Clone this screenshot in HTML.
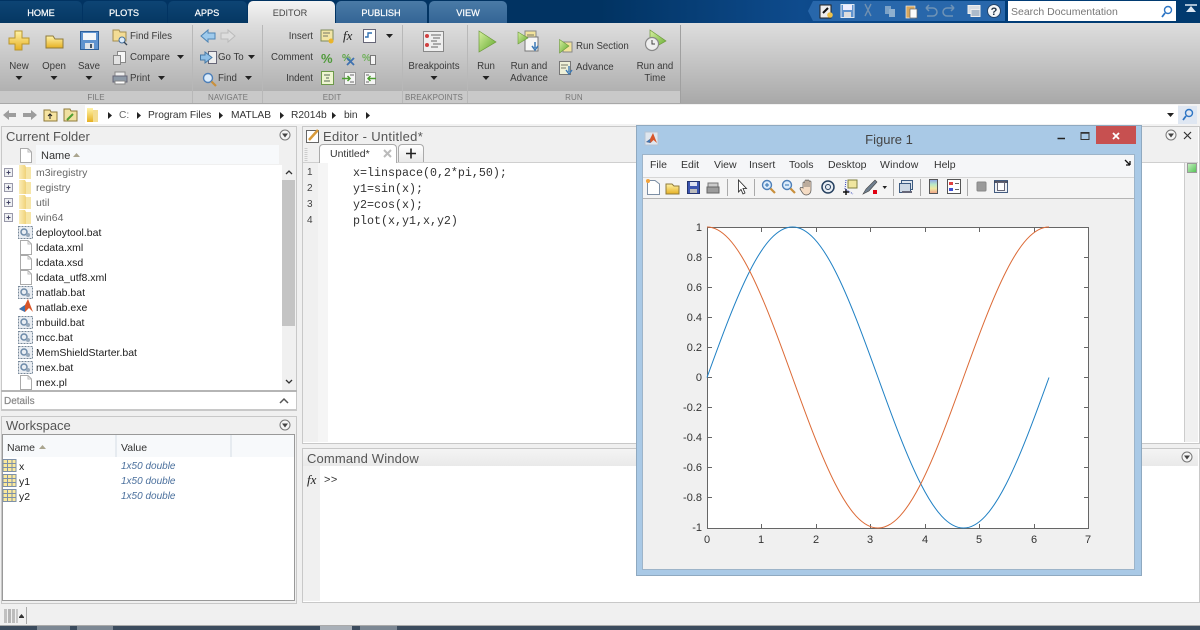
<!DOCTYPE html>
<html><head><meta charset="utf-8"><title>MATLAB R2014b</title>
<style>
html,body{margin:0;padding:0;background:#f0f0f0}
body{width:1200px;height:630px;overflow:hidden;position:relative;background:#f0f0f0;font-family:"Liberation Sans",sans-serif;font-size:10.5px;color:#333;filter:blur(.3px)}
div,span.t{position:absolute}
.t{position:absolute;white-space:nowrap;line-height:14px;height:14px;margin-top:1px}
.c{transform:translateX(-50%)}
.r{transform:translateX(-100%)}
.tab{top:1px;height:22px;background:linear-gradient(#0d4474,#053762);border-radius:5px 5px 0 0}
.tt{color:#fff;font-size:9.2px;top:5px;-webkit-text-stroke:.2px #fff}
.sec{top:91px;height:12px;background:#c9c9c9}
.sl{color:#777;font-size:8px;letter-spacing:.1px;top:90px}
.rb{font-size:9.7px;color:#3a3a3a}
.tree{color:#666}
.ttl{font-size:13px;color:#555}
.mono{font-family:"Liberation Mono",monospace;font-size:11.67px;color:#333}
.ln{font-size:10px;color:#444}
.m{color:#1c1c1c}
.p{font-size:10.2px;top:108px}
.yl{font-size:11px;color:#333}
svg{position:absolute;left:0;top:0}
</style></head><body>

<!-- top bar -->
<div style="left:0;top:0;width:1200px;height:23px;background:linear-gradient(90deg,#013362 0,#013362 600px,#0e4b8d 800px,#013d78 1000px,#013a6e 1200px)"></div>
<div class="tab" style="left:0;width:82px;border-top-left-radius:0"></div>
<div class="tab" style="left:83px;width:84px"></div>
<div class="tab" style="left:168px;width:79px"></div>
<div class="tab" style="left:248px;width:87px;top:1px;background:linear-gradient(#f4f4f4,#dedede)"></div>
<div class="tab" style="left:336px;width:91px;background:linear-gradient(#4a7aa6,#336495)"></div>
<div class="tab" style="left:429px;width:78px;background:linear-gradient(#4a7aa6,#336495)"></div>
<span class="t tt c" style="left:41px">HOME</span>
<span class="t tt c" style="left:124px">PLOTS</span>
<span class="t tt c" style="left:207px">APPS</span>
<span class="t tt c" style="left:290px;color:#444;-webkit-text-stroke:0">EDITOR</span>
<span class="t tt c" style="left:381px">PUBLISH</span>
<span class="t tt c" style="left:468px">VIEW</span>
<div style="left:813px;top:1px;width:192px;height:20px;background:#2867ab"></div>
<div style="left:1008px;top:1px;width:168px;height:20px;background:#fff"></div>
<span class="t" style="left:1011px;top:4px;color:#777;font-size:10.5px">Search Documentation</span>

<!-- ribbon -->
<div style="left:0;top:23px;width:1200px;height:81px;background:linear-gradient(#dedede,#a8a8a8)"></div>
<div class="sec" style="left:0;width:192px"></div>
<div class="sec" style="left:193px;width:69px"></div>
<div class="sec" style="left:263px;width:139px"></div>
<div class="sec" style="left:403px;width:64px"></div>
<div class="sec" style="left:468px;width:212px"></div>
<div style="left:192px;top:25px;width:1px;height:78px;background:#b8b8b8"></div>
<div style="left:262px;top:25px;width:1px;height:78px;background:#b8b8b8"></div>
<div style="left:402px;top:25px;width:1px;height:78px;background:#b8b8b8"></div>
<div style="left:467px;top:25px;width:1px;height:78px;background:#b8b8b8"></div>
<div style="left:680px;top:25px;width:1px;height:78px;background:#a0a0a0"></div>
<span class="t sl c" style="left:96px">FILE</span>
<span class="t sl c" style="left:228px">NAVIGATE</span>
<span class="t sl c" style="left:332px">EDIT</span>
<span class="t sl c" style="left:434px">BREAKPOINTS</span>
<span class="t sl c" style="left:574px">RUN</span>

<span class="t rb c" style="left:19px;top:59px">New</span>
<span class="t rb c" style="left:54px;top:59px">Open</span>
<span class="t rb c" style="left:89px;top:59px">Save</span>
<span class="t rb" style="left:130px;top:29px">Find Files</span>
<span class="t rb" style="left:130px;top:50px">Compare</span>
<span class="t rb" style="left:130px;top:71px">Print</span>
<span class="t rb" style="left:218px;top:50px">Go To</span>
<span class="t rb" style="left:218px;top:71px">Find</span>
<span class="t rb r" style="left:313px;top:29px">Insert</span>
<span class="t rb r" style="left:313px;top:50px">Comment</span>
<span class="t rb r" style="left:313px;top:71px">Indent</span>
<span class="t rb c" style="left:434px;top:59px">Breakpoints</span>
<span class="t rb c" style="left:486px;top:59px">Run</span>
<span class="t rb c" style="left:529px;top:59px">Run and</span>
<span class="t rb c" style="left:529px;top:71px">Advance</span>
<span class="t rb" style="left:576px;top:39px">Run Section</span>
<span class="t rb" style="left:576px;top:60px">Advance</span>
<span class="t rb c" style="left:655px;top:59px">Run and</span>
<span class="t rb c" style="left:655px;top:71px">Time</span>

<!-- path bar -->
<div style="left:0;top:104px;width:1200px;height:22px;background:#f2f2f2"></div>
<div style="left:85px;top:105px;width:1093px;height:19px;background:#fff"></div>
<div style="left:1178px;top:106px;width:19px;height:18px;background:#dfe7f2"></div>
<span class="t p" style="left:119px;color:#666">C:</span>
<span class="t p" style="left:148px">Program Files</span>
<span class="t p" style="left:231px">MATLAB</span>
<span class="t p" style="left:291px">R2014b</span>
<span class="t p" style="left:344px">bin</span>

<!-- current folder -->
<div style="left:1px;top:126px;width:294px;height:282px;border:1px solid #c8c8c8;background:#fff"></div>
<div style="left:2px;top:127px;width:294px;height:18px;background:#f0f0f0"></div>
<div style="left:2px;top:145px;width:294px;height:20px;background:#f0f0f0"></div>
<div style="left:36px;top:145px;width:243px;height:19px;background:#f7f9fb"></div>
<div style="left:282px;top:165px;width:14px;height:225px;background:#f0f0f0"></div>
<div style="left:282px;top:180px;width:13px;height:146px;background:#c4c4c4"></div>
<div style="left:1px;top:390px;width:296px;height:2px;background:#b5b5b5"></div>
<span class="t" style="left:4px;top:394px;font-size:10px;color:#888;-webkit-text-stroke:.2px #888">Details</span>
<div style="left:1px;top:409px;width:296px;height:2px;background:#c8c8c8"></div>
<span class="t ttl" style="left:6px;top:129px">Current Folder</span>
<span class="t" style="left:41px;top:148px;font-size:11px">Name</span>
<span class="t tree" style="left:36px;top:165px">m3iregistry</span>
<span class="t tree" style="left:36px;top:180px">registry</span>
<span class="t tree" style="left:36px;top:195px">util</span>
<span class="t tree" style="left:36px;top:210px">win64</span>
<span class="t m" style="left:36px;top:225px">deploytool.bat</span>
<span class="t m" style="left:36px;top:240px">lcdata.xml</span>
<span class="t m" style="left:36px;top:255px">lcdata.xsd</span>
<span class="t m" style="left:36px;top:270px">lcdata_utf8.xml</span>
<span class="t m" style="left:36px;top:285px">matlab.bat</span>
<span class="t m" style="left:36px;top:300px">matlab.exe</span>
<span class="t m" style="left:36px;top:315px">mbuild.bat</span>
<span class="t m" style="left:36px;top:330px">mcc.bat</span>
<span class="t m" style="left:36px;top:345px">MemShieldStarter.bat</span>
<span class="t m" style="left:36px;top:360px">mex.bat</span>
<span class="t m" style="left:36px;top:375px">mex.pl</span>

<!-- workspace -->
<div style="left:1px;top:416px;width:294px;height:186px;border:1px solid #c8c8c8;background:#f0f0f0"></div>
<div style="left:2px;top:434px;width:293px;height:167px;background:#fff;border:1px solid #999;box-sizing:border-box"></div>
<div style="left:3px;top:435px;width:291px;height:22px;background:#f7f9fb"></div>
<div style="left:115px;top:435px;width:2px;height:22px;background:#e6ebf0"></div>
<div style="left:230px;top:435px;width:2px;height:22px;background:#e6ebf0"></div>
<span class="t ttl" style="left:6px;top:418px">Workspace</span>
<span class="t" style="left:7px;top:440px">Name</span>
<span class="t" style="left:121px;top:440px">Value</span>
<span class="t m" style="left:19px;top:459px">x</span>
<span class="t m" style="left:19px;top:474px">y1</span>
<span class="t m" style="left:19px;top:489px">y2</span>
<span class="t" style="left:121px;top:459px;font-style:italic;color:#4a6f9c;font-size:10px">1x50 double</span>
<span class="t" style="left:121px;top:474px;font-style:italic;color:#4a6f9c;font-size:10px">1x50 double</span>
<span class="t" style="left:121px;top:489px;font-style:italic;color:#4a6f9c;font-size:10px">1x50 double</span>

<!-- editor -->
<div style="left:302px;top:126px;width:896px;height:316px;border:1px solid #c8c8c8;background:#fff"></div>
<div style="left:303px;top:127px;width:895px;height:36px;background:#f0f0f0"></div>
<div style="left:303px;top:163px;width:15px;height:279px;background:#f0f0f0"></div>
<div style="left:318px;top:163px;width:10px;height:279px;background:#f5f5f5"></div>
<div style="left:1184px;top:163px;width:14px;height:279px;background:#f0f0f0;border-left:1px solid #ccc;box-sizing:border-box"></div>
<div style="left:1187px;top:163px;width:10px;height:10px;background:linear-gradient(135deg,#c4eec0,#57c457);border:1px solid #9a9a9a;box-sizing:border-box"></div>
<div style="left:303px;top:162px;width:895px;height:1px;background:#cfcfcf"></div>
<div style="left:319px;top:144px;width:78px;height:19px;background:#fff;border:1px solid #aaa;border-bottom:0;box-sizing:border-box;border-radius:4px 4px 0 0"></div>
<div style="left:398px;top:144px;width:26px;height:18px;background:linear-gradient(#fff,#e8e8e8);border:1px solid #aaa;border-bottom:0;box-sizing:border-box;border-radius:4px 4px 0 0"></div>
<span class="t ttl" style="left:323px;top:129px;letter-spacing:.3px">Editor - Untitled*</span>
<span class="t" style="left:330px;top:146px;font-size:10.5px">Untitled*</span>
<span class="t ln" style="left:307px;top:165px">1</span>
<span class="t ln" style="left:307px;top:181px">2</span>
<span class="t ln" style="left:307px;top:197px">3</span>
<span class="t ln" style="left:307px;top:213px">4</span>
<span class="t mono" style="left:353px;top:165px">x=linspace(0,2*pi,50);</span>
<span class="t mono" style="left:353px;top:181px">y1=sin(x);</span>
<span class="t mono" style="left:353px;top:197px">y2=cos(x);</span>
<span class="t mono" style="left:353px;top:213px">plot(x,y1,x,y2)</span>

<!-- command window -->
<div style="left:302px;top:448px;width:896px;height:153px;border:1px solid #c8c8c8;background:#fff"></div>
<div style="left:303px;top:449px;width:895px;height:17px;background:linear-gradient(#f4f4f4,#e9e9e9)"></div>
<div style="left:303px;top:466px;width:17px;height:135px;background:#f0f0f0"></div>
<span class="t ttl" style="left:307px;top:451px;letter-spacing:.15px">Command Window</span>
<span class="t" style="left:307px;top:472px;font-family:'Liberation Serif',serif;font-style:italic;font-size:13px;color:#222">fx</span>
<span class="t" style="left:324px;top:472px;font-size:11px;color:#333;letter-spacing:.5px">&gt;&gt;</span>

<!-- status -->
<div style="left:0;top:625px;width:1200px;height:1px;background:#aaa"></div>
<div style="left:0;top:626px;width:1200px;height:4px;background:#3c4c5e"></div>
<div style="left:37px;top:626px;width:33px;height:4px;background:#7d8894"></div>
<div style="left:77px;top:626px;width:36px;height:4px;background:#7d8894"></div>
<div style="left:320px;top:626px;width:32px;height:4px;background:#a9b0b8"></div>
<div style="left:360px;top:626px;width:37px;height:4px;background:#7d8894"></div>
<div style="left:26px;top:607px;width:1px;height:17px;background:#aaa"></div>

<!-- figure -->
<div style="left:636px;top:125px;width:506px;height:451px;background:#a9c9e6;border:1px solid #8fa9c0;box-sizing:border-box"></div>
<div style="left:642px;top:154px;width:493px;height:416px;background:#f0f0f0;border:1px solid #9db4c9;box-sizing:border-box"></div>
<div style="left:643px;top:155px;width:491px;height:22px;background:#f5f6f8"></div>
<div style="left:643px;top:177px;width:491px;height:22px;background:#f4f4f4;border-top:1px solid #d6d6d6;border-bottom:1px solid #b4b4b4;box-sizing:border-box"></div>
<div style="left:1096px;top:126px;width:40px;height:18px;background:#c75050"></div>
<span class="t c" style="left:889px;top:132px;font-size:13px;color:#444">Figure 1</span>
<span class="t" style="left:650px;top:157px">File</span>
<span class="t" style="left:681px;top:157px">Edit</span>
<span class="t" style="left:714px;top:157px">View</span>
<span class="t" style="left:749px;top:157px">Insert</span>
<span class="t" style="left:789px;top:157px">Tools</span>
<span class="t" style="left:828px;top:157px">Desktop</span>
<span class="t" style="left:880px;top:157px;letter-spacing:.2px">Window</span>
<span class="t" style="left:934px;top:157px">Help</span>
<div style="left:707px;top:227px;width:381px;height:301px;background:#fff"></div>

<span class="t yl r" style="left:702px;top:220px">1</span>
<span class="t yl r" style="left:702px;top:250px">0.8</span>
<span class="t yl r" style="left:702px;top:280px">0.6</span>
<span class="t yl r" style="left:702px;top:310px">0.4</span>
<span class="t yl r" style="left:702px;top:340px">0.2</span>
<span class="t yl r" style="left:702px;top:370px">0</span>
<span class="t yl r" style="left:702px;top:400px">-0.2</span>
<span class="t yl r" style="left:702px;top:430px">-0.4</span>
<span class="t yl r" style="left:702px;top:460px">-0.6</span>
<span class="t yl r" style="left:702px;top:490px">-0.8</span>
<span class="t yl r" style="left:702px;top:520px">-1</span>
<span class="t yl c" style="left:707px;top:532px">0</span>
<span class="t yl c" style="left:761px;top:532px">1</span>
<span class="t yl c" style="left:816px;top:532px">2</span>
<span class="t yl c" style="left:870px;top:532px">3</span>
<span class="t yl c" style="left:925px;top:532px">4</span>
<span class="t yl c" style="left:979px;top:532px">5</span>
<span class="t yl c" style="left:1034px;top:532px">6</span>
<span class="t yl c" style="left:1088px;top:532px">7</span>

<svg width="1200" height="630" viewBox="0 0 1200 630" xmlns="http://www.w3.org/2000/svg">
<defs>
<linearGradient id="gy" x1="0" y1="0" x2="0" y2="1"><stop offset="0" stop-color="#fff3a8"/><stop offset="1" stop-color="#e6b022"/></linearGradient>
<linearGradient id="gf" x1="0" y1="0" x2="1" y2="0"><stop offset="0" stop-color="#fbedb8"/><stop offset="1" stop-color="#f0d27a"/></linearGradient>
<linearGradient id="gg" x1="0" y1="0" x2="1" y2="1"><stop offset="0" stop-color="#d8f0a0"/><stop offset="1" stop-color="#5fa82c"/></linearGradient>
<linearGradient id="rb" x1="0" y1="0" x2="0" y2="1"><stop offset="0" stop-color="#8ca0e8"/><stop offset=".35" stop-color="#b8e8c8"/><stop offset=".65" stop-color="#f0e8a0"/><stop offset="1" stop-color="#f0a088"/></linearGradient>
<g id="doc"><path d="M.5 .5H8L11.5 4V14.5H.5Z" fill="#fff" stroke="#aaa"/><path d="M8 .5V4H11.5" fill="none" stroke="#bbb"/></g>
<g id="fold"><path d="M0 0H6L7 2V14H0Z" fill="url(#gf)"/><path d="M7 2H12V14H7Z" fill="#f6e5a6"/></g>
<g id="plusb"><rect x=".5" y=".5" width="8" height="8" fill="#eef0f3" stroke="#99a"/><path d="M2.5 4.5H6.5M4.5 2.5V6.5" stroke="#446"/></g>
<g id="bat"><rect x=".5" y=".5" width="14" height="12" fill="#e9edf2" stroke="#789" stroke-dasharray="2 1"/><circle cx="6" cy="6" r="3" fill="none" stroke="#6d8aa8" stroke-width="1.5"/><circle cx="10" cy="9" r="2" fill="#9ab" /></g>
<g id="grid"><rect x=".5" y=".5" width="13" height="12" fill="#fbe99b" stroke="#7d90a8"/><path d="M.5 4.500H13.5M.5 8.500H13.5M5 .5V12.500M9.500 .5V12.500" stroke="#7d90a8"/></g>
<path id="car" d="M0 0H7L3.500 4Z" fill="#222"/>
<path id="arr" d="M0 0L4 3.500L0 7Z" fill="#222"/>
<g id="drop"><circle cx="0" cy="0" r="5" fill="#f6f6f6" stroke="#777"/><path d="M-3 -1.500H3L0 2.500Z" fill="#444"/></g>
<g id="play"><path d="M0 0L17 11L0 21Z" fill="url(#gg)" stroke="#6c9a3a" stroke-width=".7"/></g>
<g id="mag"><circle cx="6" cy="6" r="4.500" fill="#dcecfb" stroke="#4d7fb8" stroke-width="1.400"/><path d="M9.500 9.500L14 14" stroke="#c9903c" stroke-width="2.200"/></g>
</defs>

<!-- Plot -->
<g fill="none" stroke="#666" stroke-width="1" shape-rendering="crispEdges">
<rect x="707.5" y="227.5" width="381" height="301"/>
<path d="M761.5 528V524M816.5 528V524M870.5 528V524M925.5 528V524M979.5 528V524M1034.5 528V524M761.5 228V232M816.5 228V232M870.5 228V232M925.5 228V232M979.5 228V232M1034.5 228V232"/>
<path d="M708 257.5H712M708 287.5H712M708 317.5H712M708 347.5H712M708 377.5H712M708 407.5H712M708 437.5H712M708 467.5H712M708 497.5H712M1088 257.5H1084M1088 287.5H1084M1088 317.5H1084M1088 347.5H1084M1088 377.5H1084M1088 407.5H1084M1088 437.5H1084M1088 467.5H1084M1088 497.5H1084"/>
</g>
<path d="M707 377.5C737 294.4 762.5 227 792.5 227C822.5 227 848 294.4 878 377.5C908 460.6 933.5 528 963.5 528C993.5 528 1019 460.6 1049 377.5" fill="none" stroke="#1f80c4" stroke-width="1"/>
<path d="M707 227C737 227 762.5 294.4 792.5 377.5C822.5 460.6 848 528 878 528C908 528 933.5 460.6 963.5 377.5C993.5 294.4 1019 227 1049 227" fill="none" stroke="#dc6a36" stroke-width="1"/>

<!-- ribbon large icons -->
<path d="M15 31H22V38H29V44H22V50H15V44H9V38H15Z" fill="url(#gy)" stroke="#b8952e"/>
<path d="M46 36H53L55 39H63V48H46Z" fill="url(#gy)" stroke="#8f7a3a"/>
<rect x="80.5" y="31.5" width="18" height="18" fill="#5f93cf" stroke="#2d5f99"/>
<rect x="83" y="33" width="13" height="7" fill="#f4f6f8"/><rect x="85" y="43" width="9" height="6" fill="#dfe3e8"/><rect x="90" y="44" width="2" height="4" fill="#456"/>
<use href="#car" x="15.5" y="76"/><use href="#car" x="50.5" y="76"/><use href="#car" x="85.5" y="76"/>
<use href="#car" x="177" y="55"/><use href="#car" x="158" y="76"/><use href="#car" x="248" y="55"/><use href="#car" x="245" y="76"/><use href="#car" x="386" y="34"/><use href="#car" x="430.5" y="76"/><use href="#car" x="482.5" y="76"/>

<!-- small ribbon icons -->
<path d="M113 30H119L120 32H126V41H113Z" fill="#f3dc95" stroke="#a38d4f"/><circle cx="122" cy="40" r="3" fill="#dcecfb" stroke="#47719e"/><path d="M124 42L127 45" stroke="#345" stroke-width="1.300"/>
<rect x="117.5" y="51.5" width="8" height="11" fill="#f6f6f6" stroke="#888"/><rect x="113.5" y="55.5" width="7" height="9" fill="#e2e2e2" stroke="#888"/>
<rect x="115" y="72" width="10" height="4" fill="#eee" stroke="#888"/><rect x="113" y="76" width="14" height="6" fill="#8d99a6" stroke="#667"/><rect x="115" y="81" width="10" height="3" fill="#fff" stroke="#888"/>
<path d="M201 36L208 30V33H215V39H208V42Z" fill="#9ecaec" stroke="#4d84b5"/>
<path d="M235 36L228 30V33H221V39H228V42Z" fill="#ddd" stroke="#bbb"/>
<rect x="208.500" y="51.500" width="8" height="12" fill="#eee" stroke="#667"/><path d="M212 57.500L205 52V55H200.500V60H205V63Z" fill="#8fbfe6" stroke="#4678a5"/>
<use href="#mag" x="202" y="72"/>
<rect x="321" y="30" width="12" height="11" fill="#f2e5a6" stroke="#7f8a5a"/><path d="M323 33H330M323 36H328" stroke="#776"/><circle cx="331" cy="41" r="2.500" fill="#eab52c"/>
<text x="343" y="40" font-family="Liberation Serif,serif" font-style="italic" font-size="13" fill="#222">fx</text>
<rect x="363.500" y="29.500" width="12" height="13" fill="#fff" stroke="#667"/><path d="M365 37H368V33H372" stroke="#2f6fb0" fill="none" stroke-width="1.400"/>
<text x="321" y="63" font-size="13" font-weight="bold" fill="#4f9a3a" font-family="Liberation Sans,sans-serif">%</text>
<text x="342" y="61" font-size="10" font-weight="bold" fill="#5fa54a" font-family="Liberation Sans,sans-serif">%</text><path d="M347 58L354 65M354 58L347 65" stroke="#3f72b0" stroke-width="1.800"/>
<text x="362" y="61" font-size="10" font-weight="bold" fill="#6fb05a" font-family="Liberation Sans,sans-serif">%</text><rect x="370.500" y="55.500" width="5" height="9" fill="#f4f4f4" stroke="#777"/>
<rect x="321.500" y="71.500" width="12" height="13" fill="#eef5d0" stroke="#6d9a4a"/><path d="M324 75H330M326 78H329M324 81H330" stroke="#565"/>
<rect x="344.500" y="72.500" width="11" height="12" fill="#f5f5f5" stroke="#999"/><path d="M350 75H354M350 82H354" stroke="#666"/><path d="M342 78.500H350M347.500 76L350 78.500L347.500 81" stroke="#4e9e32" stroke-width="1.500" fill="none"/>
<rect x="364.500" y="72.500" width="11" height="12" fill="#f5f5f5" stroke="#999"/><path d="M366 75H369M366 82H369" stroke="#666"/><path d="M376 78.500H368M370.500 76L368 78.500L370.500 81" stroke="#4e9e32" stroke-width="1.500" fill="none"/>

<!-- breakpoints & run -->
<rect x="423.500" y="31.500" width="20" height="20" fill="#eee" stroke="#888"/><circle cx="427" cy="36" r="2" fill="#d04040"/><circle cx="427" cy="45" r="2" fill="#d04040"/><path d="M431 35H441M433 38H440M431 41H437M433 44H441M431 47H438" stroke="#666"/>
<use href="#play" x="479" y="31"/>
<rect x="525" y="31" width="11" height="14" fill="#f2e39c" stroke="#888"/><path d="M527 35H534M527 38H533" stroke="#776"/>
<rect x="525" y="37" width="13" height="14" fill="#f6f6f6" stroke="#777"/><path d="M518 32L528 38L518 44Z" fill="url(#gg)" stroke="#6c9a3a" stroke-width=".6"/><path d="M535 42V48M532 46L535 50L538 46" stroke="#3a78b5" fill="none" stroke-width="1.500"/>
<rect x="563" y="42" width="9" height="10" fill="#f2e39c" stroke="#888"/><path d="M559.500 39.500L569 46L559.500 53Z" fill="url(#gg)" stroke="#6c9a3a" stroke-width=".6"/>
<rect x="559.500" y="61.500" width="11" height="13" fill="#eef0d8" stroke="#777"/><path d="M561 65H568M561 68H566" stroke="#776"/><path d="M569 66V72M566 70L569 74L572 70" stroke="#3a78b5" fill="none" stroke-width="1.400"/>
<path d="M650 30L666 41L650 50Z" fill="url(#gg)" stroke="#6c9a3a" stroke-width=".7"/><circle cx="652" cy="44" r="6.500" fill="#eee" stroke="#888" stroke-width="1.200"/><path d="M652 40V44H655" stroke="#444" fill="none"/>

<!-- quick access -->
<path d="M813 1L808 11L813 21Z" fill="#2867ab"/>
<rect x="820" y="5" width="11" height="13" fill="#eee" stroke="#222"/><path d="M823 13L828 8" stroke="#111" stroke-width="2"/><circle cx="830" cy="15" r="2.800" fill="#edc14a"/>
<rect x="841" y="4.500" width="13" height="13" fill="#5f93cf" stroke="#dfe9f3"/><rect x="843" y="5" width="9" height="5" fill="#eef"/><rect x="844" y="12" width="7" height="5" fill="#ddd"/>
<path d="M865 4L871 16M871 4L865 16" stroke="#6f8fb0" stroke-width="1.400"/>
<rect x="885" y="6" width="6" height="8" fill="#7da2c6"/><rect x="889" y="9" width="6" height="8" fill="#8fb0cf"/>
<rect x="906" y="6" width="9" height="12" fill="#d8a85e" stroke="#eee" stroke-width=".7"/><rect x="910" y="9" width="7" height="9" fill="#fafafa" stroke="#666" stroke-width=".7"/>
<path d="M926 8H933A4 4 0 0 1 933 16H927M926 8L929 5M926 8L929 11" fill="none" stroke="#6f93b6" stroke-width="1.500"/>
<path d="M954 8H947A4 4 0 0 0 947 16H953M954 8L951 5M954 8L951 11" fill="none" stroke="#6f93b6" stroke-width="1.500"/>
<rect x="968" y="5.500" width="12" height="8" fill="#d8dde3" stroke="#eee"/><rect x="971" y="9.500" width="9" height="7" fill="#aebccb" stroke="#eee"/>
<circle cx="994" cy="11" r="6.500" fill="#f4f6f8" stroke="#23456b"/><text x="994" y="15" text-anchor="middle" font-size="11" font-weight="bold" fill="#234" font-family="Liberation Sans,sans-serif">?</text>
<circle cx="1168" cy="10" r="3.500" fill="none" stroke="#2d75c4" stroke-width="1.400"/><path d="M1165 13L1162 17" stroke="#2d75c4" stroke-width="1.800"/>
<path d="M1185 5H1197" stroke="#dce7f2" stroke-width="1.500"/><path d="M1191 6L1186 12H1196Z" fill="#dce7f2"/>

<!-- path bar icons -->
<path d="M3 115L9 110V113H16V117H9V120Z" fill="#9d9d9d"/><path d="M37 115L31 110V113H23V117H31V120Z" fill="#9d9d9d"/>
<path d="M44 110H50L51 112H57V121H44Z" fill="#f6e3a0" stroke="#8f7a3a"/><path d="M50 119V114M48 116L50 114L52 116" stroke="#222" fill="none"/>
<path d="M64 109H70L71 111H77V121H64Z" fill="#efe0a0" stroke="#8f7a3a"/><path d="M67 120L73 114" stroke="#4e9e32" stroke-width="2"/>
<path d="M87 108H93V122H87Z" fill="url(#gy)"/><path d="M93 110H98V122H93Z" fill="#f4dd90"/>
<use href="#arr" x="108" y="112"/><use href="#arr" x="137" y="112"/><use href="#arr" x="219" y="112"/><use href="#arr" x="280" y="112"/><use href="#arr" x="332" y="112"/><use href="#arr" x="366" y="112"/>
<path d="M1167 113H1174L1170.500 117Z" fill="#222"/>
<circle cx="1189" cy="113" r="3.500" fill="none" stroke="#2d75c4" stroke-width="1.400"/><path d="M1186 116L1183 120" stroke="#2d75c4" stroke-width="1.800"/>

<!-- current folder icons -->
<use href="#drop" x="285" y="135"/>
<use href="#doc" x="20" y="148"/>
<path d="M73 157L76.500 153L80 157Z" fill="#aaa58f"/>
<use href="#plusb" x="4" y="168"/><use href="#plusb" x="4" y="183"/><use href="#plusb" x="4" y="198"/><use href="#plusb" x="4" y="213"/>
<use href="#fold" x="19" y="165"/><use href="#fold" x="19" y="180"/><use href="#fold" x="19" y="195"/><use href="#fold" x="19" y="210"/>
<use href="#bat" x="18" y="226"/>
<use href="#doc" x="20" y="240"/><use href="#doc" x="20" y="255"/><use href="#doc" x="20" y="270"/>
<use href="#bat" x="18" y="286"/>
<path d="M19 309L25 305L28 299L33 312L29 308L25 312Z" fill="#d8562a"/><path d="M19 309L25 305L25 312Z" fill="#3f74b0"/>
<use href="#bat" x="18" y="316"/><use href="#bat" x="18" y="331"/><use href="#bat" x="18" y="346"/><use href="#bat" x="18" y="361"/>
<use href="#doc" x="20" y="375"/>
<path d="M286 174L289 171L292 174" fill="none" stroke="#333" stroke-width="1.300"/>
<path d="M286 380L289 383L292 380" fill="none" stroke="#333" stroke-width="1.300"/>
<path d="M280 403L284 399L288 403" fill="none" stroke="#555" stroke-width="1.500"/>

<!-- workspace icons -->
<use href="#drop" x="285" y="425"/>
<path d="M39 449L42.500 445L46 449Z" fill="#aaa58f"/>
<use href="#grid" x="2.500" y="459"/><use href="#grid" x="2.500" y="474"/><use href="#grid" x="2.500" y="489"/>

<!-- editor icons -->
<rect x="306.500" y="130.500" width="12" height="12" fill="#fff" stroke="#666"/><path d="M309 140L318 130" stroke="#d89a3a" stroke-width="2.500"/>
<path d="M306 148V161" stroke="#ccc" stroke-width="3" stroke-dasharray="1 1"/>
<path d="M384 150L391 157M391 150L384 157" stroke="#bbb" stroke-width="2"/>
<path d="M406 153.500H416M411 148.500V158.500" stroke="#222" stroke-width="1.600"/>
<use href="#drop" x="1171" y="135"/><path d="M1184 132L1191 139M1191 132L1184 139" stroke="#333" stroke-width="1.200"/>
<use href="#drop" x="1187" y="457"/>

<!-- grip -->
<rect x="4" y="609" width="3" height="14" fill="#c0c0c0"/><rect x="8" y="609" width="3" height="14" fill="#b4b4b4"/><rect x="12" y="609" width="3" height="14" fill="#bcbcbc"/><rect x="16" y="609" width="2" height="14" fill="#c8c8c8"/>
<path d="M19 617L21.500 614L24 617Z" fill="#333"/><path d="M19 617.500H24" stroke="#333"/>

<!-- figure window chrome -->
<rect x="645" y="132" width="13" height="13" fill="#dfe6ee" stroke="#b5c4d4"/><path d="M646 142L650 139L653 133L657 143L653.500 140L650.500 143Z" fill="#d8562a"/><path d="M646 142L650 139L650.500 143Z" fill="#3f74b0"/>
<path d="M1057.500 138.500H1065" stroke="#222" stroke-width="1.500"/>
<rect x="1081" y="132.500" width="8" height="7" fill="none" stroke="#333"/><path d="M1081 133H1089" stroke="#333" stroke-width="1.500"/>
<path d="M1113 133L1119 139M1119 133L1113 139" stroke="#fff" stroke-width="1.800"/>
<path d="M1125 160L1130 165M1130 165H1126M1130 165V161" stroke="#111" stroke-width="1.300" fill="none"/>

<!-- figure toolbar -->
<path d="M647.500 180.500H655L659.500 184V194.500H647.500Z" fill="#fff" stroke="#7d8fa5"/><circle cx="648" cy="181" r="2" fill="#f3a33a"/>
<path d="M666 184H672L674 186H679V194H666Z" fill="url(#gy)" stroke="#8f7a3a"/>
<rect x="687.500" y="181.500" width="12" height="12" fill="#3c55b0" stroke="#24346e"/><rect x="690" y="182" width="7" height="4" fill="#dfe3f2"/><rect x="690" y="189" width="7" height="4" fill="#bbb"/>
<rect x="708" y="183" width="10" height="5" fill="#cbcbcb" stroke="#777"/><rect x="707" y="187" width="12" height="6" fill="#9b9b9b" stroke="#666"/>
<path d="M727.500 179V196M754.500 179V196M893.500 179V196M920.500 179V196M967.500 179V196" stroke="#aaa"/>
<path d="M738.500 180V192L741 189.500L743 194L745 193L743 188.500H746.500Z" fill="#fff" stroke="#222" stroke-width=".8"/>
<g transform="translate(761 179)"><use href="#mag"/><path d="M4 6H8M6 4V8" stroke="#2e6fb0"/></g>
<g transform="translate(781 179)"><use href="#mag"/><path d="M4 6H8" stroke="#2e6fb0"/></g>
<path d="M803 188V183A1 1 0 0 1 805 183V187V181A1 1 0 0 1 807 181V187V181A1 1 0 0 1 809 181V187V182A1 1 0 0 1 811 182V190C811 193 809 195 806 195C803 195 802 192 800 189C800 187 802 187 803 188Z" fill="#f5dcc4" stroke="#555" stroke-width=".7"/>
<circle cx="828" cy="187" r="6" fill="#e8edf3" stroke="#26405f" stroke-width="1.500"/><circle cx="828" cy="187" r="2.500" fill="none" stroke="#26405f"/>
<rect x="848" y="180" width="9" height="8" fill="#f0e6a0" stroke="#7f7f3f"/><path d="M846 189V195M843 192H849" stroke="#111" stroke-width="1.500"/><path d="M846 180L845 189L853 194" fill="none" stroke="#3344bb" stroke-dasharray="1 1"/>
<path d="M863 194L866 189L875 180L877 182L869 191Z" fill="#6f7f8f" stroke="#444" stroke-width=".6"/><rect x="873" y="190" width="4" height="4" fill="#e00010"/>
<path d="M882.500 186H887L884.750 189Z" fill="#222"/>
<rect x="901.500" y="180.500" width="11" height="9" fill="#dfe6ee" stroke="#3c5a80"/><rect x="899.500" y="183.500" width="11" height="9" fill="#cdd8e4" stroke="#3c5a80"/><path d="M902 192H912" stroke="#667" stroke-width="2"/>
<rect x="929.500" y="179.500" width="8" height="14" fill="url(#rb)" stroke="#555"/>
<rect x="947.500" y="179.500" width="13" height="14" fill="#fff" stroke="#555"/><rect x="949" y="182" width="4" height="3" fill="#e04040"/><rect x="949" y="188" width="4" height="3" fill="#4050d0"/><path d="M955 183.500H959M955 189.500H959" stroke="#666"/>
<rect x="977" y="182" width="9" height="9" rx="1" fill="#9a9a9a" stroke="#888"/>
<rect x="994.500" y="180.500" width="13" height="12" fill="#eef1f5" stroke="#445c80"/><path d="M994.500 182H1007.500" stroke="#223" stroke-width="1.500"/><rect x="997.500" y="182.500" width="7" height="8" fill="#fff" stroke="#667"/>
</svg>
</body></html>
